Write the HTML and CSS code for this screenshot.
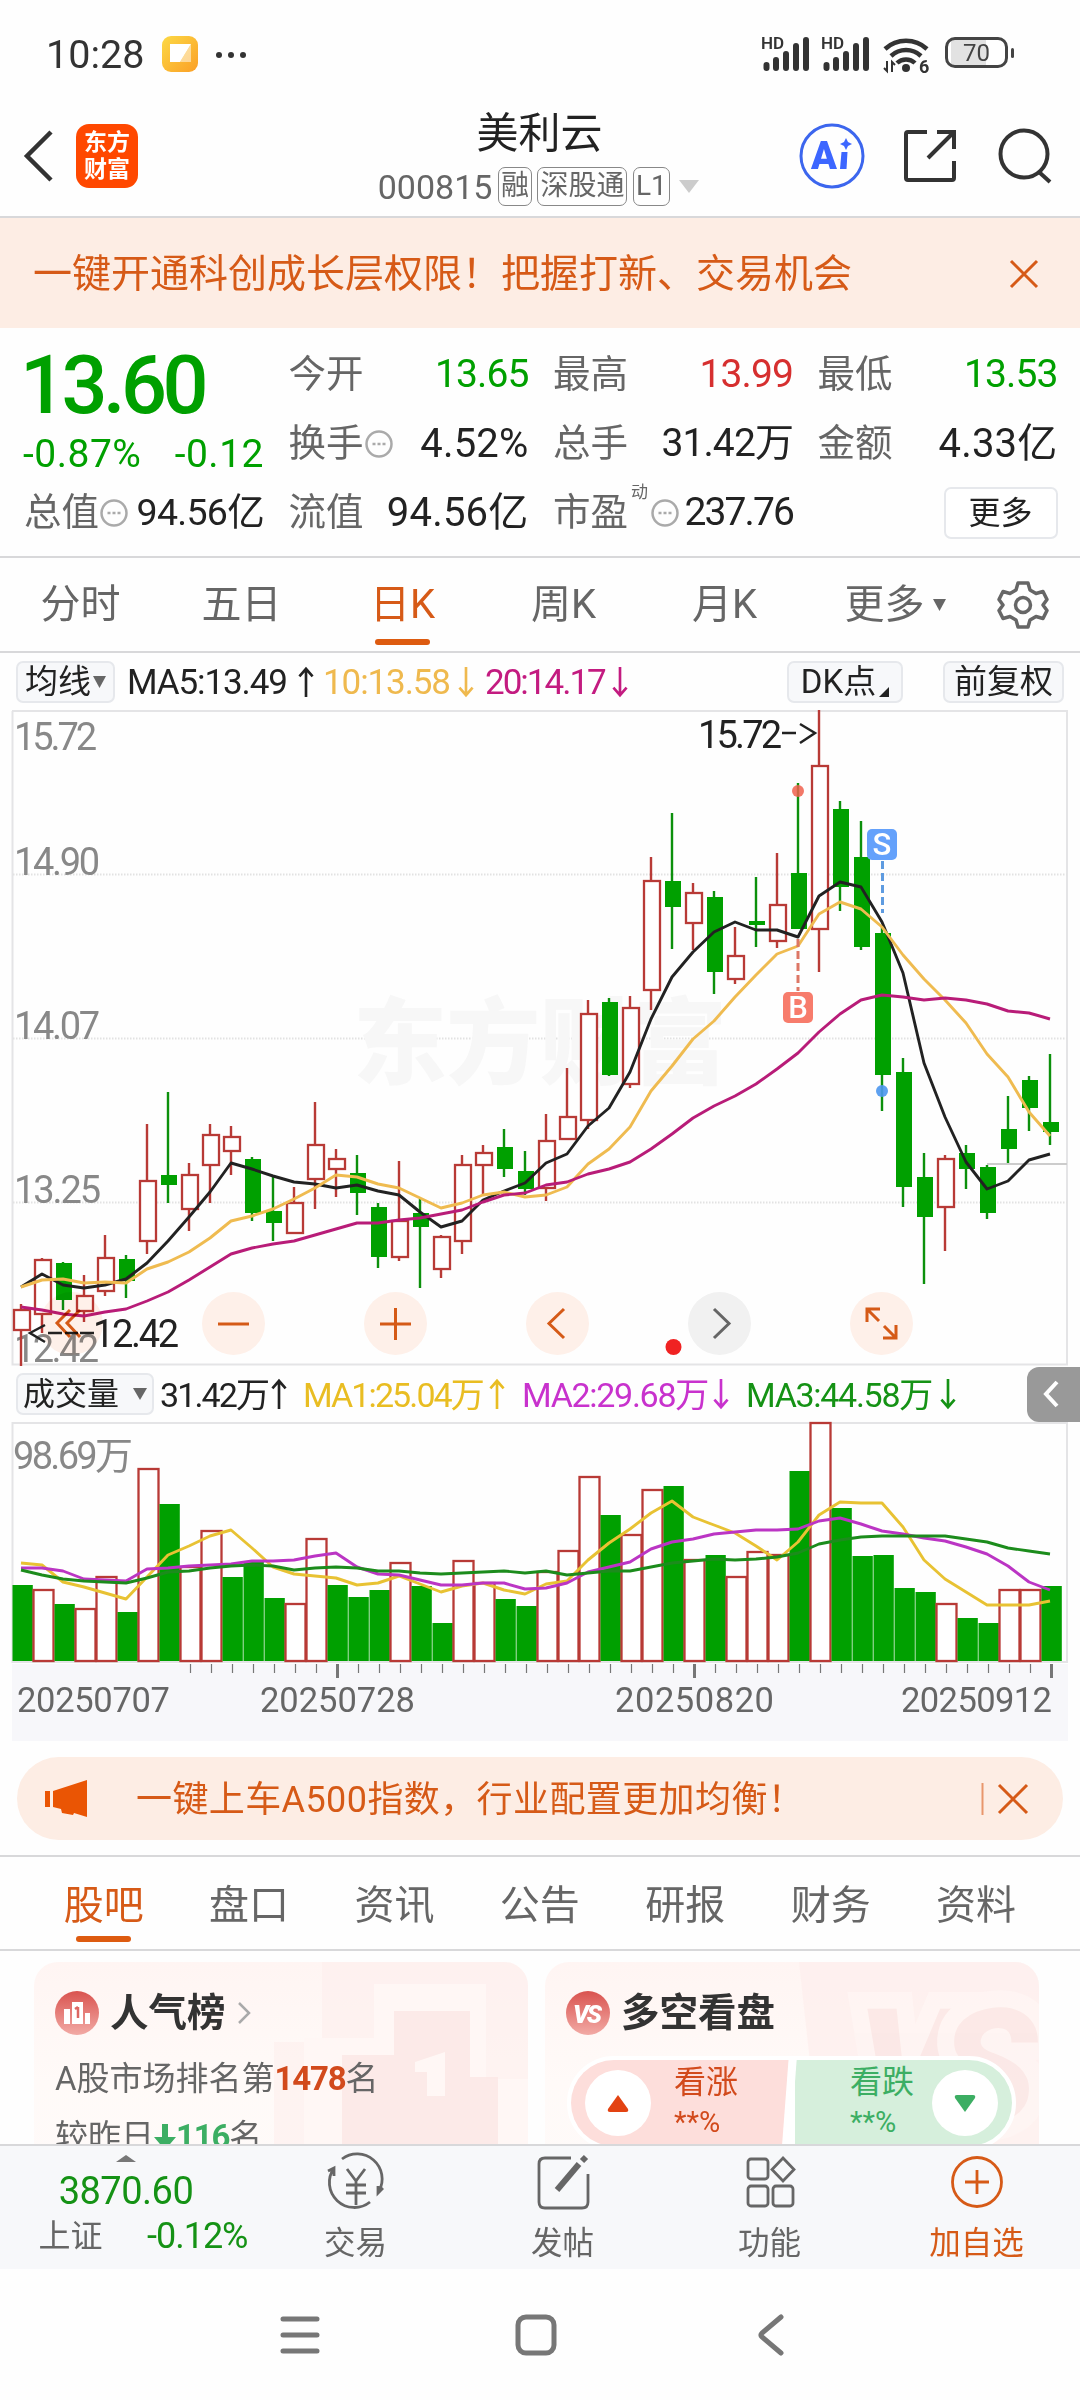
FILE: index.html
```
<!DOCTYPE html>
<html lang="zh-CN">
  <head>
    <meta charset="UTF-8">
    <meta name="viewport" content="width=device-width, initial-scale=1">
    <title>美利云 000815</title>
    <link rel="stylesheet" href="styles.css">
    <script src="chart.js" defer></script>
  </head>
  <body>

    <svg class="defs" width="0" height="0">
      <symbol id="up" viewBox="0 0 16 34"><path d="M8 33V3M1 11l7-8 7 8"/></symbol>
      <symbol id="down" viewBox="0 0 16 34"><path d="M8 1v30M1 23l7 8 7-8"/></symbol>
      <symbol id="more" viewBox="0 0 28 28"><circle cx="14" cy="14" r="12.5"/><path d="M7.5 14h3M12.5 14h3M17.5 14h3"/></symbol>
      <symbol id="signal" viewBox="0 0 52 36">
        <path d="M3.500 29v3M13 24v8M23 18v14M33 10v22M43 4v28" transform="translate(2 0)"/>
      </symbol>
      <linearGradient id="note" x1="0" y1="0" x2="1" y2="1"><stop offset="0" stop-color="#fcd945"/><stop offset="1" stop-color="#fb9f26"/></linearGradient>
      <linearGradient id="badge" x1="0" y1="0" x2="0" y2="1"><stop offset="0" stop-color="#d9534f"/><stop offset="1" stop-color="#f2aaa5"/></linearGradient>
    </svg>

    <div class="status">
      <span class="clock">10:28</span>
      <svg class="note" width="36" height="36"><rect width="36" height="36" rx="9" fill="url(#note)"/><path d="M8 8h21L18 26H8z" fill="#fff"/><path d="M29 8v18H18z" fill="#fff" opacity=".5"/></svg>
      <svg class="dots" width="32" height="8" fill="#333"><circle cx="2" cy="4" r="3"/><circle cx="14" cy="4" r="3"/><circle cx="26" cy="4" r="3"/></svg>
      <div class="status-icons">
        <div class="signal"><b>HD</b><svg width="52" height="36"><use href="#signal"/></svg></div>
        <div class="signal"><b>HD</b><svg width="52" height="36"><use href="#signal"/></svg></div>
        <svg class="wifi" width="48" height="38" viewBox="0 0 48 38">
          <path d="M2 13a31 31 0 0 1 42 0M8 20a22 22 0 0 1 30 0M14 27a13 13 0 0 1 18 0" fill="none" stroke="#333" stroke-width="4.500"/>
          <circle cx="23" cy="32" r="4" fill="#333"/>
          <path d="M4 25v10l-3-3M9 36V26l3 3" fill="none" stroke="#333" stroke-width="2"/>
          <text x="36" y="37">6</text>
        </svg>
        <div class="battery"><span>70</span></div>
      </div>
    </div>

    <header class="header">
      <div class="header-side">
        <svg width="30" height="52" class="back"><path d="M27 2L3 26l24 24" fill="none" stroke="#333" stroke-width="4.500"/></svg>
        <div class="logo"><span>东方</span><span>财富</span></div>
      </div>
      <div class="header-title">
        <h1>美利云</h1>
        <div class="code"><span class="num">000815</span><i>融</i><i>深股通</i><i>L1</i><svg width="20" height="13"><path d="M0 0h20L10 13z" fill="#ccc"/></svg></div>
      </div>
      <div class="header-side header-actions">
        <svg width="66" height="66"><circle cx="33" cy="33" r="31" fill="none" stroke="#3c66ee" stroke-width="3"/><text class="ai" x="12" y="46">A</text><path d="M42.500 29h6l-1 17h-6.500z" fill="#3c66ff"/><path d="M47 15l2 4 4 2-4 2-2 4-2-4-4-2 4-2z" fill="#3c66ff"/></svg>
        <svg width="56" height="56" fill="none" stroke="#333" stroke-width="4"><path d="M24 4H5q-2 0-2 2v44q0 2 2 2h44q2 0 2-2V33M34 4h17v17M51 4L25 30"/></svg>
        <svg width="56" height="56" fill="none" stroke="#333" stroke-width="4"><circle cx="27" cy="26" r="23.500"/><path d="M42 44l11 10"/></svg>
      </div>
    </header>

    <div class="notice">
      <span>一键开通科创成长层权限！把握打新、交易机会</span>
      <svg width="28" height="28"><path d="M1 1l26 26M27 1L1 27" stroke="#d65a17" stroke-width="3"/></svg>
    </div>

    <section class="quote">
      <div class="price">
        <strong>13.60</strong>
        <div><span>-0.87%</span><span>-0.12</span></div>
      </div>
      <div class="cell"><label>今开</label><span class="down">13.65</span></div>
      <div class="cell"><label>最高</label><span class="up">13.99</span></div>
      <div class="cell"><label>最低</label><span class="down">13.53</span></div>
      <div class="cell"><label>换手<svg class="tip"><use href="#more"/></svg></label><span class="wide">4.52%</span></div>
      <div class="cell"><label>总手</label><span>31.42万</span></div>
      <div class="cell"><label>金额</label><span class="wide">4.33亿</span></div>
      <div class="cell tight"><label>总值<svg class="tip"><use href="#more"/></svg></label><span>94.56亿</span></div>
      <div class="cell"><label>流值</label><span class="wide">94.56亿</span></div>
      <div class="cell"><label>市盈<sup>动</sup><svg class="tip"><use href="#more"/></svg></label><span class="pe">237.76</span></div>
      <button class="more">更多</button>
    </section>

    <nav class="periods">
      <a>分时</a><a>五日</a><a class="active">日K</a><a>周K</a><a>月K</a>
      <a class="period-more">更多<svg width="13" height="12"><path d="M0 0h13L6.500 12z" fill="#666"/></svg></a>
      <svg class="gear" width="50" height="50" viewBox="-25 -25 50 50" fill="none" stroke="#666" stroke-width="3.500" stroke-linejoin="round"><path d="M-5-22h10l2 7 6 3.500 7-2 4 8-4 5.500 4 5.500-4 8-7-2-6 3.500-2 7h-10l-2-7-6-3.500-7 2-4-8 4-5.500-4-5.500 4-8 7 2 6-3.500z"/><circle r="7.500"/></svg>
    </nav>

    <div class="legend">
      <button class="pick">均线<svg width="13" height="12"><path d="M0 0h13L6.500 12z" fill="#666"/></svg></button>
      <span class="ma ma5">MA5:13.49<svg class="arrow"><use href="#up"/></svg></span>
      <span class="ma ma10">10:13.58<svg class="arrow"><use href="#down"/></svg></span>
      <span class="ma ma20">20:14.17<svg class="arrow"><use href="#down"/></svg></span>
      <button class="dk">DK点<svg width="10" height="10"><path d="M10 0v10H0z" fill="#222"/></svg></button>
      <button class="adjust">前复权</button>
    </div>

    <section class="kline">
      <svg id="kline" width="1080" height="656" viewBox="0 710 1080 656">
        <g class="frame"><path d="M12 711H1067V1364.500H12.500V711"/></g>
        <path class="grid" d="M13 874.500H1067M13 1038.500H1067M13 1202.500H1067"/>
        <text class="watermark" x="353" y="1077" textLength="374">东方财富</text>
        <g class="scale">
          <text x="14" y="750" textLength="83">15.72</text>
          <text x="14" y="875" textLength="86">14.90</text>
          <text x="14" y="1039" textLength="86">14.07</text>
          <text x="14" y="1203" textLength="87">13.25</text>
          <text x="14" y="1362" textLength="85">12.42</text>
        </g>
        <path d="M987 1164H1067" stroke="#ccc" stroke-width="2"/>
        <g id="candles"></g>
        <path d="M798 939V991" class="dash" stroke="#dd7766"/>
        <circle cx="798" cy="791" r="6" fill="#f0604d" opacity=".85"/>
        <rect x="783" y="992" width="30" height="31" rx="5" fill="#f77c6c"/>
        <text class="mark" x="798" y="1018">B</text>
        <path d="M882.500 861V913" class="dash" stroke="#5e9be0"/>
        <circle cx="882" cy="1091" r="6" fill="#4d97ee" opacity=".9"/>
        <rect x="867" y="829" width="30" height="31" rx="5" fill="#64a1fb"/>
        <text class="mark" x="882" y="855">S</text>
        <g class="extreme">
          <text x="698" y="748" textLength="84">15.72</text>
          <path d="M782 733h14M800 724l15 9-15 10"/>
          <text x="93" y="1347" textLength="86">12.42</text>
          <path d="M45 1325l-15 8 15 9M48 1333h14M65 1333h13M80 1333h14"/>
        </g>
        <circle cx="673.500" cy="1347" r="8" fill="#f02222"/>
      </svg>
      <div class="tools">
        <button><svg><path d="M30 18L17 31l13 14M40 18L27 31l13 14"/></svg></button>
        <button><svg><path d="M16 32h31"/></svg></button>
        <button><svg><path d="M16 32h31M31.500 16v32"/></svg></button>
        <button><svg><path d="M38 17L23 31.500 38 46"/></svg></button>
        <button class="off"><svg><path d="M26 17l15 14.500L26 46"/></svg></button>
        <button><svg><path d="M17 30V17h13M18 18l11 11M46 33v13H33M45 45L34 34"/></svg></button>
      </div>
    </section>

    <div class="legend volume-legend">
      <button class="pick">成交量<svg width="14" height="12"><path d="M0 0h14L7 12z" fill="#666"/></svg></button>
      <span class="ma vol">31.42万<svg class="arrow"><use href="#up"/></svg></span>
      <span class="ma vma1">MA1:25.04万<svg class="arrow"><use href="#up"/></svg></span>
      <span class="ma vma2">MA2:29.68万<svg class="arrow"><use href="#down"/></svg></span>
      <span class="ma vma3">MA3:44.58万<svg class="arrow"><use href="#down"/></svg></span>
      <div class="handle"><svg width="16" height="28"><path d="M11 2L0 14l11 12" fill="none" stroke="#fff" stroke-width="4"/></svg></div>
    </div>

    <svg id="volume" width="1080" height="320" viewBox="0 1422 1080 320">
      <rect x="12" y="1664" width="1056" height="77" fill="#f7f7fa"/>
      <g class="frame"><path d="M12.500 1423H1067V1662H12.500z"/></g>
      <text class="scale" x="13" y="1469" textLength="120">98.69万</text>
      <g id="bars"></g>
      <g id="ticks"></g>
      <g class="dates">
        <text x="17" y="1712" textLength="153">20250707</text>
        <text x="260" y="1712" textLength="155">20250728</text>
        <text x="615" y="1712" textLength="159">20250820</text>
        <text x="901" y="1712" textLength="151">20250912</text>
      </g>
    </svg>

    <div class="promo">
      <svg width="44" height="38" fill="#ea5504"><path d="M0 11h5v16H0zM8 11L42 0v37l-13-4-1 2-11-2-1-4-8-2z"/></svg>
      <span>一键上车A500指数，行业配置更加均衡！</span>
      <svg class="promo-close" width="47" height="34"><path d="M1.500 1v32" stroke="#e8966c" stroke-width="2"/><path d="M18 3l28 28M46 3L18 31" stroke="#d65a17" stroke-width="3"/></svg>
    </div>

    <nav class="sections">
      <a class="active">股吧</a><a>盘口</a><a>资讯</a><a>公告</a><a>研报</a><a>财务</a><a>资料</a>
    </nav>

    <section class="cards">
      <article class="card">
        <svg class="card-bg" width="494" height="200"><path d="M240 80h48V0h206v200H240z" fill="#fdeeed" opacity=".6"/><path d="M270 76h70V22h112v95h42v83H270z" fill="#fff7f5"/><path d="M308 93h52V49h76v66h28v85H308z" fill="#fbe5e3" opacity=".75"/><path d="M381 100l30-10v44h-18v-24h-12z" fill="#fff7f5"/></svg>
        <h2><svg width="44" height="44"><circle cx="22" cy="22" r="22" fill="url(#badge)"/><path d="M9 18h6v15H9zM17 11h11v22H17zM30 22h5v11h-5z" fill="#fff"/><path d="M23 16v11M20 18l3-2" stroke="#dd6763" stroke-width="2.500"/></svg>人气榜<svg class="go" width="14" height="22"><path d="M2 1l10 10L2 21" fill="none" stroke="#aaa" stroke-width="2.500"/></svg></h2>
        <p>A股市场排名第<b class="rank">1478</b>名</p>
        <p>较昨日<svg width="22" height="28"><path d="M8 0h6v13h8L11 26 0 13h8z" fill="#3cae63"/></svg><b class="drop">116</b> 名</p>
      </article>
      <article class="card">
        <svg class="card-bg" width="494" height="200"><path d="M254 0h240v200H276z" fill="#fdeeed" opacity=".7"/><text x="312" y="160" textLength="180">VS</text></svg>
        <h2><svg width="44" height="44"><circle cx="22" cy="22" r="22" fill="url(#badge)"/><text class="vs" x="7" y="32" textLength="29">VS</text></svg>多空看盘</h2>
        <div class="vote">
          <div class="bull"><em><svg width="22" height="17"><path d="M11 0l10 14q1 3-2 3H3q-3 0-2-3z" fill="#e34312"/></svg></em><span>看涨<small>**%</small></span></div>
          <div class="bear"><span>看跌<small>**%</small></span><em><svg width="22" height="17"><path d="M11 17L1 3Q0 0 3 0h16q3 0 2 3z" fill="#3cae63"/></svg></em></div>
        </div>
      </article>
    </section>

    <footer class="dock">
      <div class="index">
        <svg width="20" height="7"><path d="M0 7L10 0l10 7z" fill="#777"/></svg>
        <strong>3870.60</strong>
        <div><span>上证</span><b>-0.12%</b></div>
      </div>
      <a><svg viewBox="0 0 60 56"><path d="M16 7A25 25 0 0 1 53 39M44 50A25 25 0 0 1 8 16M2 19l6-3v8M57 36l-5 5v-7M21 17l9 12 9-12M30 29v24M20 33h20M20 41h20" transform="translate(0 -2)"/></svg>交易</a>
      <a><svg viewBox="0 0 60 56"><path d="M38 4H12q-6 0-6 6v38q0 6 6 6h37q6 0 6-6V20"/><path d="M24 36L46 10" stroke-width="6"/><path d="M49 7l4-4" stroke-width="6"/></svg>发帖</a>
      <a><svg viewBox="0 0 60 56"><rect x="8" y="5" width="20" height="20" rx="3"/><rect x="8" y="32" width="20" height="20" rx="3"/><rect x="33" y="32" width="20" height="20" rx="3"/><path d="M43 4l11 11.500L43 27 32 15.500z"/></svg>功能</a>
      <a class="add"><svg viewBox="0 0 60 56"><circle cx="30" cy="28" r="24.500"/><path d="M18 28h24M30 16v24"/></svg>加自选</a>
    </footer>

    <div class="sysnav">
      <svg width="40" height="40"><path d="M3 4h34M3 20h34M3 36h34"/></svg>
      <svg width="42" height="42"><rect x="3" y="3" width="36" height="36" rx="8"/></svg>
      <svg width="30" height="42"><path d="M25 3L6 19q-2 2 0 4l19 16"/></svg>
    </div>

  </body>
</html>
```

FILE: styles.css
```
:root {
  --clr-text:   #222;
  --clr-label:  #666;
  --clr-scale:  #888;
  --clr-line:   #d8d8da;
  --clr-accent: #d65a17;
  --clr-rise:   #b83a36;
  --clr-fall:   #00a000;
  --clr-panel:  #f7f8fa;
}

*, *::before, *::after {
  box-sizing: border-box;
}

body {
  margin: 0;
  width: 1080px;
  height: 2400px;
  overflow: hidden;
  display: flex;
  flex-direction: column;
  color: var(--clr-text);
  background: #fefefe;
  font: 36px/1 Roboto, "Noto Sans CJK SC", sans-serif;
}

body > * { flex: none }
svg { display: block; flex: none; overflow: visible }
.defs { position: absolute }

button {
  display: flex;
  align-items: center;
  justify-content: center;
  padding: 0;
  color: inherit;
  font: inherit;
  background: var(--clr-panel);
  border: 2px solid #e6e8ec;
  border-radius: 7px;
}

/* Status bar */

.status {
  display: flex;
  align-items: center;
  height: 108px;
  padding: 2px 72px 0 46px;
}
.clock { width: 116px; font-size: 39.500px; letter-spacing: 0; color: #333 }
.note { margin-top: -2px }
.dots { margin-left: 19px }
.status-icons { display: flex; margin-left: auto }
.signal { position: relative; width: 60px; height: 36px }
.signal b { position: absolute; left: 0; top: -1px; font-size: 17px; font-weight: 600; color: #333 }
#signal path { stroke: #333; stroke-width: 6; stroke-linecap: round }
.wifi { margin-left: 2px }
.wifi text { font-size: 18px; font-weight: 700; fill: #333 }
.battery {
  position: relative;
  width: 63px;
  height: 31px;
  margin: 1px 0 0 14px;
  border: 3px solid #444;
  border-radius: 10px;
  background: linear-gradient(to right, #fff 3px, #e2e2e2 3px 38px, #fff 38px);
  font-size: 24px;
  line-height: 26px;
  text-align: center;
  color: #444;
}
.battery::after { content: ""; position: absolute; right: -9px; top: 8px; width: 3px; height: 10px; background: #444; border-radius: 2px }

/* Header */

.header {
  display: flex;
  justify-content: space-between;
  align-items: center;
  height: 110px;
  padding: 0 27px 14px 24px;
  border-bottom: 2px solid var(--clr-line);
}
.header-side { display: flex; align-items: center; width: 260px; margin-top: 2px }
.header-actions { justify-content: flex-end; gap: 38px }
.ai { font: 900 38px Roboto, sans-serif; fill: #3c66ff }
.logo {
  display: flex;
  flex-direction: column;
  justify-content: center;
  align-items: center;
  width: 62px;
  height: 64px;
  margin-left: 22px;
  border-radius: 13px;
  background: #ff4800;
  color: #fff;
  font-size: 23px;
  font-weight: 700;
  line-height: 27px;
}
.header-title { display: flex; flex-direction: column; align-items: center; gap: 12px; margin-top: 6px }
h1 { margin: 3px 0 0 2px; font-size: 42px; font-weight: 400; line-height: 42px }
.code { display: flex; align-items: center; gap: 5.500px; color: #666; height: 39px }
.code .num { font-size: 34px; letter-spacing: 0 }
.code i { height: 39px; padding: 0 2px; font-size: 28px; line-height: 36px; font-style: normal; border: 1.5px solid #888; border-radius: 7px }
.code svg { margin-left: 4px }

.notice {
  display: flex;
  justify-content: space-between;
  align-items: center;
  height: 110px;
  padding: 2px 42px 0 33px;
  background: #fdede4;
  color: var(--clr-accent);
  font-size: 39px;
}

/* Quote */

.quote {
  display: grid;
  grid-template-columns: repeat(4, 240px);
  grid-template-rows: repeat(3, 69px);
  column-gap: 24.5px;
  height: 230px;
  padding: 12px 0 0 24px;
  border-bottom: 2px solid var(--clr-line);
}
.price { grid-row: span 2; color: var(--clr-fall); margin-left: -4px }
.price strong { display: block; height: 90px; font-size: 81px; line-height: 92px; font-weight: 500; letter-spacing: -4.500px }
.price div { display: flex; justify-content: space-between; margin-left: 3px; font-size: 39px; line-height: 48px; letter-spacing: 0.5px }
.cell { display: flex; align-items: center; justify-content: space-between; font-size: 39px; letter-spacing: -0.9px; white-space: nowrap }
.cell label { display: flex; align-items: center; font-size: 37.500px; letter-spacing: 0; color: var(--clr-label) }
.cell .wide { font-size: 40px; letter-spacing: 0.2px }
.cell.tight span { font-size: 37.500px; letter-spacing: -0.7px }
.cell .pe { font-size: 39px; letter-spacing: -1.9px }
.cell sup { align-self: flex-start; width: 17px; margin: -10px 2px 0 3px; font-size: 17px; line-height: 17px }
.tip { width: 28px; height: 28px; margin-left: 1px; fill: none; stroke: #aaa; stroke-width: 2.500 }
.up { color: #d62f2f }
.cell .down { color: var(--clr-fall) }
.more { justify-self: end; align-self: center; width: 114px; height: 52px; background: #fff; font-size: 32px; grid-column: 4 }

/* Tabs */

.periods {
  display: flex;
  align-items: center;
  height: 95px;
  border-bottom: 2px solid var(--clr-line);
}
.periods a, .sections a {
  position: relative;
  flex: none;
  width: 161px;
  color: var(--clr-label);
  font-size: 40px;
  line-height: 97px;
  text-align: center;
}
.active::after {
  content: "";
  position: absolute;
  left: 50%;
  bottom: 8px;
  width: 55px;
  height: 6px;
  margin-left: -27.500px;
  border-radius: 3px;
  background: #dd5b10;
}
.periods .active, .sections .active { color: var(--clr-accent) }
.periods .period-more { display: flex; align-items: center; justify-content: center; gap: 8px; width: 180px }
.gear { margin-left: 13px }

.sections {
  display: flex;
  height: 96px;
  padding-left: 31px;
  border: solid var(--clr-line);
  border-width: 2px 0;
  margin-top: 15px;
}
.sections a { width: 145.400px }
.sections .active::after { bottom: 7px }

/* Indicator legends */

.legend { display: flex; align-items: center; height: 57px; padding: 0 16px; font-size: 33px; white-space: nowrap }
.legend button { height: 42px }
.pick { gap: 2px; width: 99px }
.ma { display: flex; align-items: center; justify-content: space-between; padding-top: 2px; font-size: 35px; letter-spacing: -1.1px }
.arrow { width: 16px; height: 32px; margin-top: -2px; fill: none; stroke: currentColor; stroke-width: 2.800 }
.ma5 { width: 187px; margin-left: 12px }
.ma10 { width: 151px; margin-left: 9px; color: #efb94e }
.ma20 { width: 143px; margin-left: 11px; color: #c31b80; letter-spacing: -2px }
.dk { width: 116px; margin-left: auto; gap: 3px }
.dk svg { align-self: flex-end; margin-bottom: 4px }
.adjust { width: 121px; margin-left: 40px }

.volume-legend { height: 56px; padding-right: 0 }
.volume-legend .pick { width: 138px; gap: 14px; font-size: 32px }
.volume-legend .ma { font-size: 34px; letter-spacing: -1.900px }
.vol { width: 127px; margin-left: 6px }
.vma1 { width: 202px; margin-left: 16px; color: #e9bd22 }
.vma2 { width: 207px; margin-left: 17px; color: #c832cd }
.vma3 { width: 210px; margin-left: 17px; color: #159215 }
.volume-legend .vma2, .volume-legend .vma3 { letter-spacing: -1.3px }
.handle { display: flex; align-items: center; justify-content: center; width: 53px; height: 55px; margin-left: auto; background: #999; border-radius: 12px 0 0 12px }

/* Charts */

.kline { position: relative; height: 656px }
#kline { overflow: hidden }
.frame { fill: none; stroke: #e4e4e6; stroke-width: 2 }
.grid { stroke: #e2e2e2; stroke-width: 2; stroke-dasharray: 1.500 1.500 }
.watermark { font-size: 94px; font-weight: 900; fill: #f7f7f7 }
.scale { font-size: 38px; fill: var(--clr-scale) }
.extreme { font-size: 38px; fill: var(--clr-text) }
.extreme path { fill: none; stroke: var(--clr-text); stroke-width: 2.500 }
.dates { font-size: 34.500px; fill: #666 }
.dash { fill: none; stroke-width: 3; stroke-dasharray: 8 4 }
.mark { font-size: 31px; font-weight: 500; text-anchor: middle; fill: #fff }

.rise { fill: #fff; stroke: var(--clr-rise); stroke-width: 2.300 }
.fall { fill: var(--clr-fall) }
.wick { fill: none; stroke-width: 2.400 }
.wick.rise { stroke: var(--clr-rise) }
.wick.fall { stroke: #0c900c }
.line { fill: none; stroke-width: 2.900; stroke-linejoin: round }
.tick { stroke: #777; stroke-width: 1.200 }
.tick.major { stroke-width: 3 }

.tools {
  position: absolute;
  left: 40px;
  top: 582px;
  display: flex;
  gap: 99px;
  mix-blend-mode: multiply;
}
.tools button { width: 63px; height: 63px; border: 0; border-radius: 50%; background: #fff1ea }
.tools svg { width: 63px; height: 63px; fill: none; stroke: var(--clr-accent); stroke-width: 3 }
.tools .off { background: #f2f2f2 }
.tools .off svg { stroke: #666 }

/* Promo */

.promo {
  display: flex;
  align-items: center;
  height: 83px;
  margin: 15px 17px 0;
  padding: 0 35px 0 28px;
  border-radius: 42px;
  background: #fdede4;
  color: var(--clr-accent);
  font-size: 36px;
}
.promo span { margin-left: 47px; padding-top: 2px; letter-spacing: 0.4px }
.promo-close { margin-left: auto }

/* Cards */

.cards { display: flex; gap: 17px; height: 193px; padding: 11px 0 0 34px; overflow: hidden }
.card {
  position: relative;
  flex: none;
  width: 494px;
  height: 230px;
  padding: 28px 0 0 21px;
  overflow: hidden;
  border-radius: 24px;
  background: linear-gradient(#fff5f3, #fffaf8 120px, #fefaf9);
}
.card > * { position: relative }
.card .card-bg { position: absolute; left: 0; top: 0 }
.card-bg text { font: italic 900 160px Roboto, sans-serif; fill: #fbe6e4; stroke: #fff6f4; stroke-width: 34; paint-order: stroke; opacity: .75 }
.card h2 { display: flex; align-items: center; gap: 11px; height: 46px; margin: 0; font-size: 38.500px; font-weight: 700; color: #333 }
.vs { font: italic 900 25px Roboto, sans-serif; fill: #fff }
.card p { display: flex; align-items: center; height: 58px; margin: 0; font-size: 33px; color: var(--clr-label) }
.card h2 + p { margin-top: 13px }
.card b { font-weight: 700; letter-spacing: -1.2px }
.card .rank { color: #d24a1c }
.card .drop { color: #3cae63 }
.card p svg { margin-top: 4px }
.vote {
  display: flex;
  gap: 6px;
  width: 449px;
  height: 94px;
  margin: 20px 0 0 1px;
  border: 4px solid #fff;
  border-radius: 47px;
  overflow: hidden;
  background: #fff;
}
.vote div { display: flex; flex: 1; align-items: center; padding: 0 14px }
.vote .bull { background: #fddedb; color: #d24a1c; clip-path: polygon(0 0, 100% 0, 97% 100%, 0 100%) }
.vote .bear { justify-content: flex-end; background: #d6efdc; color: #3cae63; clip-path: polygon(1% 0, 100% 0, 100% 100%, -2% 100%) }
.vote em { display: flex; align-items: center; justify-content: center; width: 66px; height: 66px; border-radius: 50%; background: #fff }
.vote span { font-size: 32px; line-height: 42px; margin: -4px 24px 0 23px }
.vote .bear span { margin-right: 18px }
.vote small { display: block; font-size: 29px; line-height: 38px }

/* Bottom */

.dock { display: flex; height: 125px; border-top: 2px solid var(--clr-line); background: var(--clr-panel) }
.dock a {
  display: flex;
  flex-direction: column;
  align-items: center;
  width: 207px;
  padding-top: 8px;
  gap: 18px;
  font-size: 31.500px;
  color: var(--clr-label);
}
.dock a svg { width: 60px; height: 56px; fill: none; stroke: #666; stroke-width: 2.800 }
.dock .add { color: var(--clr-accent) }
.dock .add svg { stroke: var(--clr-accent) }
.index { display: flex; flex-direction: column; align-items: center; width: 252px; padding-top: 9px }
.index strong { margin: 7px 0 0; font-size: 38px; line-height: 44px; font-weight: 400; color: #159215; letter-spacing: -0.5px }
.index div { display: flex; justify-content: space-between; width: 209px; margin-left: 34px; line-height: 46px; font-size: 32px; color: var(--clr-label) }
.index b { font-weight: 400; font-size: 36px; color: #159215; letter-spacing: -1px }

.sysnav { display: flex; align-items: center; gap: 195px; height: 130px; padding: 1px 0 0 280px }
.sysnav svg { fill: none; stroke: #777; stroke-width: 5; stroke-linecap: round }
.sysnav svg:last-child { margin-left: 4px }
```

FILE: chart.js
```
// Daily sessions: [direction, high, body top, body bottom, low, volume top, volume direction if it differs]
const days = [
  ['r',1304,1310,1330,1366,1585,'g'],
  ['r',1258,1260,1314,1333,1590],
  ['g',1262,1263,1300,1310,1604],
  ['r',1275,1296,1311,1322,1609],
  ['r',1235,1258,1291,1296,1577],
  ['g',1255,1259,1281,1298,1612],
  ['r',1124,1181,1241,1254,1469],
  ['g',1092,1175,1185,1203,1504],
  ['r',1163,1175,1209,1231,1567],
  ['r',1124,1135,1165,1203,1531],
  ['r',1126,1137,1151,1175,1577,'g'],
  ['g',1157,1159,1213,1221,1562],
  ['g',1177,1211,1223,1241,1598],
  ['r',1187,1203,1233,1233,1604],
  ['r',1102,1145,1179,1209,1539],
  ['r',1149,1159,1169,1197,1585,'g'],
  ['g',1155,1173,1193,1215,1597],
  ['g',1203,1207,1257,1268,1590],
  ['r',1161,1221,1257,1261,1563],
  ['g',1199,1213,1227,1288,1586],
  ['r',1235,1237,1269,1278,1623,'g'],
  ['r',1155,1165,1241,1254,1561],
  ['r',1145,1153,1165,1195,1583],
  ['g',1129,1147,1169,1177,1599],
  ['g',1151,1171,1189,1195,1606],
  ['r',1114,1141,1188,1201,1572],
  ['r',1068,1117,1139,1139,1551],
  ['r',1000,1014,1120,1129,1477],
  ['g',998,1002,1075,1076,1515],
  ['r',996,1008,1084,1088,1535],
  ['r',857,881,990,1010,1490],
  ['g',813,881,907,949,1486],
  ['r',883,893,923,950,1560],
  ['g',891,897,972,994,1555],
  ['r',927,956,979,984,1577],
  ['g',877,921,925,947,1552,'r'],
  ['r',853,905,941,948,1555],
  ['g',783,873,929,929,1471],
  ['r',710,766,929,972,1423],
  ['g',801,809,887,911,1508],
  ['g',821,857,947,950,1556],
  ['g',925,933,1075,1111,1555],
  ['g',1058,1072,1187,1207,1588],
  ['g',1153,1177,1217,1284,1592],
  ['r',1155,1159,1207,1251,1604],
  ['g',1145,1153,1169,1189,1618],
  ['g',1165,1167,1213,1219,1623],
  ['g',1096,1129,1149,1163,1590,'r'],
  ['g',1076,1080,1108,1131,1590,'r'],
  ['g',1054,1122,1132,1145,1586],
];

const averages = {
  '#222': [1287,1274,1285,1288,1285,1279,1263,1241,1217,1192,1163,1169,1176,1182,1184,1188,1185,1191,1195,1212,1227,1221,1200,1191,1183,1163,1154,1126,1108,1072,1019,977,952,932,922,930,930,937,896,882,887,922,973,1063,1117,1162,1189,1181,1160,1154],
  '#efbb50': [1287,1280,1279,1283,1282,1283,1269,1262,1252,1238,1221,1216,1209,1199,1188,1175,1177,1184,1188,1198,1208,1203,1195,1192,1197,1195,1187,1164,1149,1127,1091,1066,1039,1021,997,975,954,946,914,902,909,927,955,979,1000,1023,1054,1077,1112,1136],
  '#b81c78': [1307,1310,1314,1316,1312,1309,1301,1292,1280,1267,1254,1248,1244,1241,1235,1229,1223,1223,1220,1218,1214,1210,1202,1195,1193,1185,1182,1174,1169,1162,1149,1134,1118,1106,1096,1084,1069,1053,1032,1014,1000,995,997,1000,998,1000,1004,1011,1013,1019],
};

const volumeAverages = {
  '#e8c233': [1563,1565,1582,1587,1593,1599,1577,1555,1546,1536,1530,1548,1567,1574,1576,1578,1585,1583,1576,1584,1592,1586,1583,1590,1594,1584,1581,1560,1543,1529,1513,1501,1517,1525,1533,1546,1560,1542,1515,1502,1503,1503,1527,1560,1579,1592,1605,1605,1605,1601],
  '#bb35c4': [1568,1568,1571,1579,1580,1581,1569,1568,1566,1565,1564,1561,1561,1560,1556,1553,1567,1574,1575,1580,1585,1585,1583,1583,1589,1588,1583,1572,1567,1562,1549,1542,1539,1534,1532,1530,1530,1529,1521,1518,1524,1531,1534,1538,1541,1547,1554,1566,1582,1590],
  '#1c8c1c': [1570,1575,1579,1581,1582,1583,1578,1572,1571,1568,1566,1565,1566,1570,1568,1567,1568,1571,1571,1573,1574,1573,1572,1571,1573,1571,1575,1573,1571,1571,1567,1563,1561,1559,1560,1559,1557,1553,1544,1540,1537,1536,1536,1536,1536,1539,1542,1548,1551,1554],
};

const STEP = 21;
const BASE = 1661;
const px = i => STEP + STEP * i;

const lines = set => Object.entries(set).map(([color, ys]) =>
  `<polyline class="line" stroke="${color}" points="${ys.map((y, i) => px(i) + ',' + y).join(' ')}"/>`
).join('');

const box = (dir, x, top, bottom, width) =>
  `<rect class="${dir === 'r' ? 'rise' : 'fall'}" x="${x}" y="${top}" width="${width}" height="${bottom - top}"/>`;

let candles = '';
let bars = '';
days.forEach(([dir, high, top, bottom, low, vol, volDir = dir], i) => {
  const x = px(i);
  candles += `<path class="wick ${dir === 'r' ? 'rise' : 'fall'}" d="M${x} ${high}V${top}M${x} ${bottom}V${low}"/>`;
  candles += box(dir, x - 7, top, bottom, 16);
  bars += volDir === 'r'
    ? box('r', x - 8.5, vol, BASE, 20)
    : box('g', x - 8.5, vol, BASE, 20.3);
});

document.getElementById('candles').innerHTML = candles + lines(averages);
document.getElementById('bars').innerHTML = bars + lines(volumeAverages);

let ticks = '';
for (let i = 8; i < 50; i++) {
  const major = [15, 32, 49].includes(i);
  ticks += `<path class="tick${major ? ' major' : ''}" d="M${px(i) + 1.5} 1664v${major ? 14 : 9}"/>`;
}
document.getElementById('ticks').innerHTML = ticks;
```
